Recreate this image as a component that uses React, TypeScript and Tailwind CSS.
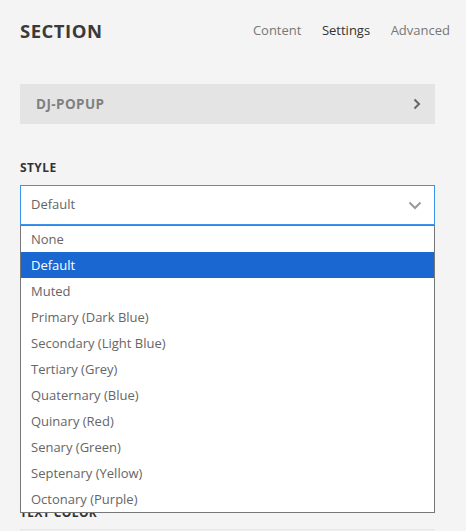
import React from "react";

const items = [
  "None",
  "Default",
  "Muted",
  "Primary (Dark Blue)",
  "Secondary (Light Blue)",
  "Tertiary (Grey)",
  "Quaternary (Blue)",
  "Quinary (Red)",
  "Senary (Green)",
  "Septenary (Yellow)",
  "Octonary (Purple)",
];

export default function App() {
  return (
    <div
      className="w-[466px] h-[531px] overflow-hidden bg-[#f4f4f4] text-[#666]"
      style={{ fontFamily: '"Open Sans", "Liberation Sans", sans-serif' }}
    >
      <div className="px-5 pt-[19px]">
        <div className="flex items-center justify-between h-[24px]">
          <div className="text-[18.5px] font-bold text-[#3a3a3a] tracking-[0.5px]">SECTION</div>
          <div className="flex gap-[20.5px] text-[13px] text-[#777] mr-[-4px]">
            <span>Content</span>
            <span className="text-[#333]">Settings</span>
            <span>Advanced</span>
          </div>
        </div>

        <div className="mt-[41px] h-[40px] w-[415px] bg-[#e4e4e4] flex items-center justify-between pl-[16px] pr-[14px]">
          <span className="text-[13.5px] font-bold text-[#808080] tracking-[0.4px]">DJ-POPUP</span>
          <svg width="8" height="12" viewBox="0 0 8 12" className="text-[#666]">
            <polyline points="1.5,1.5 6,6 1.5,10.5" fill="none" stroke="currentColor" strokeWidth="2" />
          </svg>
        </div>

        <div className="mt-[36px] text-[12px] font-bold text-[#333] tracking-[0.4px] leading-[16px]">STYLE</div>

        <div className="relative mt-[9px] w-[415px]">
          <div className="h-[40px] border border-[#3b93ee] bg-white flex items-center justify-between pl-[10px] pr-[12px]">
            <span className="text-[13px] text-[#666]">Default</span>
            <svg width="14" height="9" viewBox="0 0 14 9" className="text-[#999]">
              <polyline points="1.5,1.5 7,7 12.5,1.5" fill="none" stroke="currentColor" strokeWidth="2" />
            </svg>
          </div>
          <div className="absolute left-0 top-full w-[415px] border border-[#777] bg-white z-10">
            {items.map((it) => (
              <div
                key={it}
                className={
                  it === "Default"
                    ? "h-[26px] flex items-center pt-[2px] pl-[10px] text-[13px] bg-[#1a67d2] text-white"
                    : "h-[26px] flex items-center pt-[2px] pl-[10px] text-[13px] text-[#666]"
                }
              >
                {it}
              </div>
            ))}
          </div>
        </div>

        <div className="mt-[280px] text-[12px] font-bold text-[#333] tracking-[0.4px] leading-[16px]">TEXT COLOR</div>
        <div className="mt-[8px] h-[40px] w-[415px] bg-[#efefef] border border-[#e6e6e6]"></div>
      </div>
    </div>
  );
}
